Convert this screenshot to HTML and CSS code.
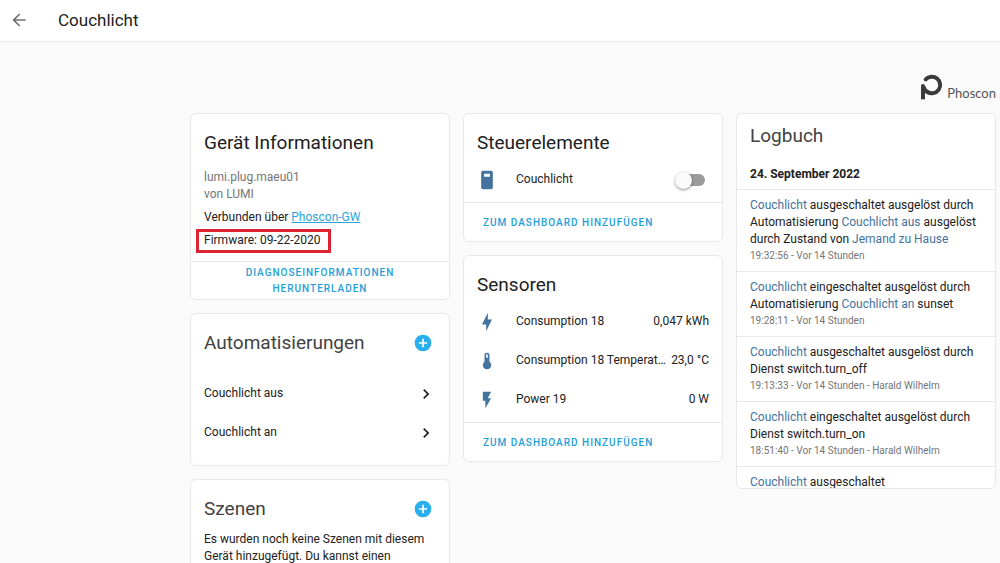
FILE: index.html
```
<!DOCTYPE html>
<html lang="de">
<head>
  <meta charset="UTF-8">
  <meta name="viewport" content="width=device-width, initial-scale=1.0">
  <title>Couchlicht</title>
  <link rel="stylesheet" href="styles.css">
</head>
<body>

  <header class="toolbar">
    <button class="icon-btn back" aria-label="Zurück">
      <svg class="icon" viewBox="0 0 24 24"><path d="M20,11V13H8L13.5,18.5L12.08,19.92L4.16,12L12.08,4.08L13.5,5.5L8,11H20Z"/></svg>
    </button>
    <div class="toolbar-title">Couchlicht</div>
  </header>

  <main class="page">
    <div class="brand">
      <svg class="brand-mark" viewBox="0 0 72 78" fill="none" stroke="#3a3a3c" stroke-width="12">
        <path d="M17 16A25 25 0 1 1 22 54" stroke-linecap="round"/>
        <path d="M9 76V38"/>
        <circle cx="9" cy="36" r="6" fill="#3a3a3c" stroke="none"/>
        <path d="M10 38A29 29 0 0 0 24 55"/>
      </svg>
      <span class="brand-name">Phoscon</span>
    </div>

    <div class="columns">
      <div class="column">
        <section class="card">
          <h1 class="card-title">Gerät Informationen</h1>
          <div class="device-info">
            <div class="muted">lumi.plug.maeu01</div>
            <div class="muted">von LUMI</div>
            <div class="info-line">Verbunden über <a href="#">Phoscon-GW</a></div>
            <div class="info-line firmware">Firmware: 09-22-2020</div>
          </div>
          <div class="actions centered">
            <button class="text-btn">Diagnoseinformationen<br>herunterladen</button>
          </div>
        </section>

        <section class="card automations">
          <div class="card-head">
            <h1 class="card-title light">Automatisierungen</h1>
            <button class="icon-btn add" aria-label="Automatisierung hinzufügen">
              <svg class="icon" viewBox="0 0 24 24"><path d="M17,13H13V17H11V13H7V11H11V7H13V11H17M12,2A10,10 0 0,0 2,12A10,10 0 0,0 12,22A10,10 0 0,0 22,12A10,10 0 0,0 12,2Z"/></svg>
            </button>
          </div>
          <a class="row link-row" href="#">
            <span>Couchlicht aus</span>
            <svg class="icon" viewBox="0 0 24 24"><path d="M8.59,16.58L13.17,12L8.59,7.41L10,6L16,12L10,18L8.59,16.58Z"/></svg>
          </a>
          <a class="row link-row" href="#">
            <span>Couchlicht an</span>
            <svg class="icon" viewBox="0 0 24 24"><path d="M8.59,16.58L13.17,12L8.59,7.41L10,6L16,12L10,18L8.59,16.58Z"/></svg>
          </a>
        </section>

        <section class="card scenes">
          <div class="card-head">
            <h1 class="card-title light">Szenen</h1>
            <button class="icon-btn add" aria-label="Szene hinzufügen">
              <svg class="icon" viewBox="0 0 24 24"><path d="M17,13H13V17H11V13H7V11H11V7H13V11H17M12,2A10,10 0 0,0 2,12A10,10 0 0,0 12,22A10,10 0 0,0 22,12A10,10 0 0,0 12,2Z"/></svg>
            </button>
          </div>
          <p class="card-text">Es wurden noch keine Szenen mit diesem Gerät hinzugefügt. Du kannst einen</p>
        </section>
      </div>

      <div class="column">
        <section class="card">
          <h1 class="card-title">Steuerelemente</h1>
          <div class="entities">
            <div class="row entity">
              <svg class="icon" viewBox="0 0 24 24"><path fill-rule="evenodd" d="M7,1H17A2,2 0 0,1 19,3V21A2,2 0 0,1 17,23H7A2,2 0 0,1 5,21V3A2,2 0 0,1 7,1ZM8.5,4.5V8H15.5V4.5Z"/></svg>
              <label class="name" for="couchlicht">Couchlicht</label>
              <input class="switch" type="checkbox" id="couchlicht">
            </div>
          </div>
          <div class="actions">
            <button class="text-btn">Zum Dashboard hinzufügen</button>
          </div>
        </section>

        <section class="card">
          <h1 class="card-title">Sensoren</h1>
          <div class="entities">
            <div class="row entity">
              <svg class="icon" viewBox="0 0 24 24"><path d="M11 15H6L13 1V9H18L11 23V15Z"/></svg>
              <span class="name">Consumption 18</span>
              <span class="value">0,047 kWh</span>
            </div>
            <div class="row entity">
              <svg class="icon" viewBox="0 0 24 24"><path d="M15 13V5A3 3 0 0 0 9 5V13A5 5 0 1 0 15 13M12 4A1 1 0 0 1 13 5V8H11V5A1 1 0 0 1 12 4Z"/></svg>
              <span class="name">Consumption 18 Temperature</span>
              <span class="value">23,0 °C</span>
            </div>
            <div class="row entity">
              <svg class="icon" viewBox="0 0 24 24"><path d="M7,2V13H10V22L17,10H13L17,2H7Z"/></svg>
              <span class="name">Power 19</span>
              <span class="value">0 W</span>
            </div>
          </div>
          <div class="actions">
            <button class="text-btn">Zum Dashboard hinzufügen</button>
          </div>
        </section>
      </div>

      <div class="column">
        <section class="card logbook">
          <h1 class="card-title light">Logbuch</h1>
          <div class="log-list">
            <h4 class="log-date">24. September 2022</h4>
            <div class="log-entry">
              <div><a href="#">Couchlicht</a> ausgeschaltet ausgelöst durch Automatisierung <a href="#">Couchlicht aus</a> ausgelöst durch Zustand von <a href="#">Jemand zu Hause</a></div>
              <div class="log-time">19:32:56 - Vor 14 Stunden</div>
            </div>
            <div class="log-entry">
              <div><a href="#">Couchlicht</a> eingeschaltet ausgelöst durch Automatisierung <a href="#">Couchlicht an</a> sunset</div>
              <div class="log-time">19:28:11 - Vor 14 Stunden</div>
            </div>
            <div class="log-entry">
              <div><a href="#">Couchlicht</a> ausgeschaltet ausgelöst durch Dienst switch.turn_off</div>
              <div class="log-time">19:13:33 - Vor 14 Stunden - Harald Wilhelm</div>
            </div>
            <div class="log-entry">
              <div><a href="#">Couchlicht</a> eingeschaltet ausgelöst durch Dienst switch.turn_on</div>
              <div class="log-time">18:51:40 - Vor 14 Stunden - Harald Wilhelm</div>
            </div>
            <div class="log-entry">
              <div><a href="#">Couchlicht</a> ausgeschaltet</div>
            </div>
          </div>
        </section>
      </div>
    </div>
  </main>

</body>
</html>
```

FILE: styles.css
```
* {
  box-sizing: border-box;
}
body {
  margin: 0;
  height: 100vh;
  overflow: hidden;
  font-family: Roboto, "Noto Sans", sans-serif;
  font-size: 12px;
  line-height: 17px;
  color: #212121;
  background: #fafafa;
}
.icon {
  display: block;
  width: 20px;
  height: 20px;
  fill: currentColor;
  flex-shrink: 0;
}
.icon-btn {
  padding: 0;
  border: none;
  background: none;
  cursor: pointer;
}
.toolbar {
  display: flex;
  align-items: center;
  height: 42px;
  padding: 0 9px 2px;
  background: #fff;
  border-bottom: 1px solid #e8e8e8;
}
.back {
  color: #727272;
}
.toolbar-title {
  margin-left: 29px;
  font-size: 17px;
  line-height: 20px;
}
.page {
  padding: 0 4px 0 190px;
}
.brand {
  display: flex;
  justify-content: flex-end;
  align-items: flex-end;
  gap: 3px;
  height: 71px;
  padding-bottom: 13px;
  color: #555;
}
.brand-mark {
  width: 24px;
  height: 26px;
}
.brand-name {
  font-family: Lato, sans-serif;
  font-size: 13px;
  line-height: 14px;
}
.columns {
  display: grid;
  grid-template-columns: repeat(3, minmax(0, 1fr));
  gap: 13px;
  align-items: start;
}
.column {
  display: flex;
  flex-direction: column;
  gap: 13px;
}
.card {
  background: #fff;
  border: 1px solid #e8e8e8;
  border-radius: 6px;
}
.card-title {
  margin: 0;
  padding: 15px 13px 10px;
  font-size: 19px;
  font-weight: 400;
  line-height: 28px;
}
.card-title.light {
  color: #424242;
}
.card-head {
  display: flex;
  justify-content: space-between;
  align-items: center;
  padding-right: 16px;
}
.add {
  padding-top: 5px;
  color: #29b0ec;
}
.device-info {
  padding: 2px 13px 12px;
}
.muted {
  color: #757575;
}
.info-line {
  position: relative;
  margin-top: 6px;
}
.info-line a {
  color: #2da5dc;
}
/* red frame round the firmware version */
.firmware {
  width: fit-content;
}
.firmware::after {
  content: "";
  position: absolute;
  inset: -3px -11px -4px -8px;
  border: 3px solid #dd2430;
}
.actions {
  padding: 11px 13px 10px;
  border-top: 1px solid #e8e8e8;
}
.actions.centered {
  padding: 3px 13px 2px;
  text-align: center;
}
.text-btn {
  padding: 0 6px;
  border: none;
  background: none;
  font-family: inherit;
  font-size: 10px;
  font-weight: 500;
  line-height: 16px;
  letter-spacing: 1px;
  text-transform: uppercase;
  color: #1fa0da;
  cursor: pointer;
}
.row {
  display: flex;
  align-items: center;
  height: 39px;
}
.link-row {
  justify-content: space-between;
  padding: 0 13px;
  color: inherit;
  text-decoration: none;
}
.automations {
  padding-bottom: 13px;
}
.automations .card-head {
  margin-bottom: 7px;
}
.card-text {
  margin: 0;
  padding: 0 13px 40px;
}
.scenes .card-title {
  padding-bottom: 8px;
}
.scenes .add {
  padding-top: 7px;
}
.entities {
  padding: 0 13px 3px;
}
.entity {
  margin-top: -7px;
}
.entity + .entity {
  margin-top: 0;
}
.entity .icon {
  margin-right: 19px;
  color: #44739e;
}
.name {
  flex: 1;
  min-width: 0;
  overflow: hidden;
  white-space: nowrap;
  text-overflow: ellipsis;
}
.value {
  margin-left: 3px;
  white-space: nowrap;
}
.switch {
  appearance: none;
  position: relative;
  width: 28px;
  height: 12px;
  margin: 0 4px 0 0;
  border-radius: 6px;
  background: #9b9b9b;
  cursor: pointer;
}
.switch::before {
  content: "";
  position: absolute;
  top: -2px;
  left: -2px;
  width: 17px;
  height: 17px;
  border-radius: 50%;
  background: #fafafa;
  box-shadow: 0 1px 3px rgba(0, 0, 0, 0.45);
}
.logbook {
  overflow: hidden;
}
.logbook .card-title {
  padding: 8px 13px 10px;
}
.log-list {
  max-height: 328px;
  overflow: hidden;
}
.log-date {
  margin: 0;
  padding: 6px 13px;
  font-size: 12px;
  font-weight: 700;
}
.log-entry {
  padding: 7px 13px;
  border-top: 1px solid #e8e8e8;
}
.log-entry a {
  color: #44739e;
  text-decoration: none;
}
.log-time {
  font-size: 10px;
  line-height: 16px;
  color: #757575;
}
```
